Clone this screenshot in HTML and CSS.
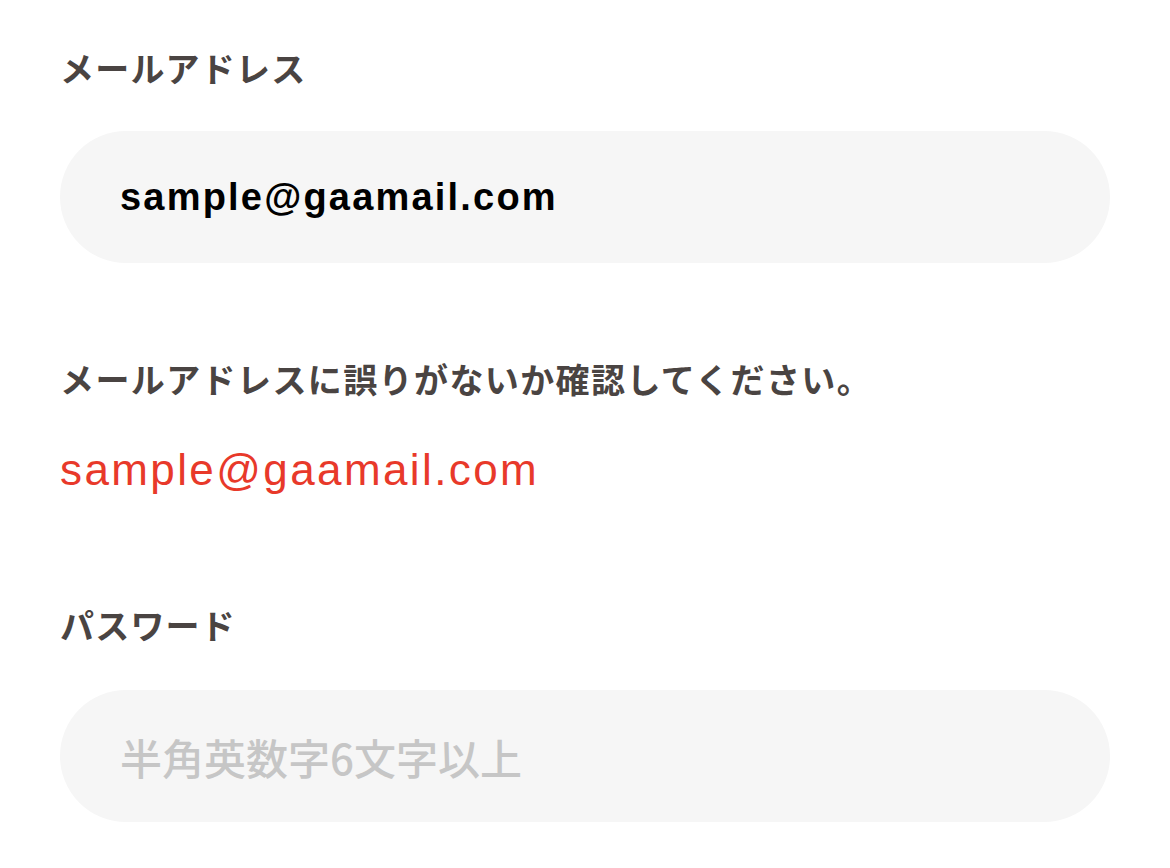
FILE: index.html
```html
<!DOCTYPE html>
<html lang="ja">
<head>
<meta charset="utf-8">
<link rel="stylesheet" href="styles.css">
</head>
<body>
<form class="form">
  <label class="label">メールアドレス</label>
  <div class="field"><span class="value">sample@gaamail.com</span></div>
  <p class="notice">メールアドレスに誤りがないか確認してください。</p>
  <p class="email">sample@gaamail.com</p>
  <label class="label label-pw">パスワード</label>
  <div class="field"><span class="placeholder">半角英数字6文字以上</span></div>
</form>
</body>
</html>
```
FILE: styles.css
```css
html, body { margin: 0; padding: 0; background: #fff; }
body { font-family: "Noto Sans CJK JP", sans-serif; }
.form { display: flex; flex-direction: column; padding: 46px 60px 0 60px; }
.label { font-size: 34px; font-weight: 700; color: #4a4442; line-height: 44px; letter-spacing: 1.2px; display: block; }
.field { margin-top: 41px; height: 132px; border-radius: 66px; background: #f6f6f6; display: flex; align-items: center; padding: 0 60px; }
.value { font-family: "Liberation Sans", Arial, sans-serif; font-weight: 700; font-size: 38px; letter-spacing: 2.2px; color: #000; }
.placeholder { font-family: "Noto Sans CJK JP", sans-serif; font-weight: 500; font-size: 42px; color: #c6c6c6; }
.notice { margin: 94px 0 0; font-size: 34px; font-weight: 700; color: #4a4442; line-height: 44px; letter-spacing: 1.4px; }
.email { margin: 44px 0 0; font-family: "Liberation Sans", Arial, sans-serif; font-size: 44px; letter-spacing: 2.4px; color: #e8392a; line-height: 50px; }
.label-pw { margin-top: 108px; }
.label-pw + .field { margin-top: 43px; }
```
